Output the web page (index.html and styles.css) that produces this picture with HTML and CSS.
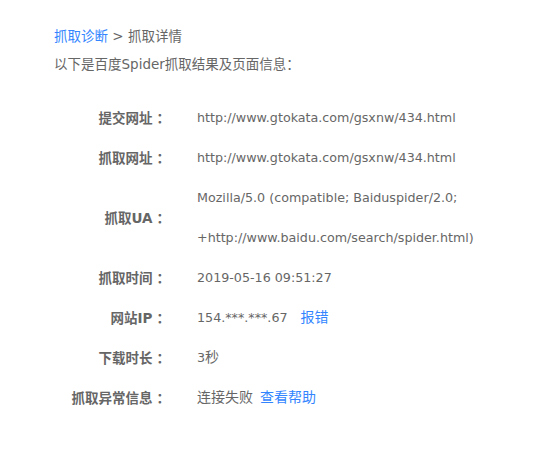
FILE: index.html
```html
<!DOCTYPE html>
<html lang="zh">
<head>
<meta charset="utf-8">
<link rel="stylesheet" href="styles.css">
</head>
<body>
<div class="page">
  <div class="crumb"><a class="link" href="#">抓取诊断</a> &gt; 抓取详情</div>
  <div class="intro">以下是百度Spider抓取结果及页面信息：</div>
  <div class="table">
    <div class="label">提交网址<span class="colon">：</span></div>
    <div class="value">http://www.gtokata.com/gsxnw/434.html</div>
    <div class="label">抓取网址<span class="colon">：</span></div>
    <div class="value">http://www.gtokata.com/gsxnw/434.html</div>
    <div class="label">抓取UA<span class="colon">：</span></div>
    <div class="value">Mozilla/5.0 (compatible; Baiduspider/2.0;<br>+http://www.baidu.com/search/spider.html)</div>
    <div class="label">抓取时间<span class="colon">：</span></div>
    <div class="value">2019-05-16 09:51:27</div>
    <div class="label">网站IP<span class="colon">：</span></div>
    <div class="value">154.***.***.67 <a class="link cjk gap" href="#">报错</a></div>
    <div class="label">下载时长<span class="colon">：</span></div>
    <div class="value">3<span class="cjk">秒</span></div>
    <div class="label">抓取异常信息<span class="colon">：</span></div>
    <div class="value"><span class="cjk">连接失败</span> <a class="link cjk gap-s" href="#">查看帮助</a></div>
  </div>
</div>
</body>
</html>
```

FILE: styles.css
```css
html, body {
  margin: 0;
  padding: 0;
  background: #fff;
}
body {
  font-family: "DejaVu Sans", "Noto Sans CJK SC", sans-serif;
  font-size: 12px;
  color: #666;
}
.page {
  padding: 22px 0 0 54px;
}
.crumb, .intro {
  line-height: 28px;
  font-size: 13.5px;
}
.link {
  color: #3385ff;
  text-decoration: none;
}
.gap {
  margin-left: 9px;
}
.gap-s {
  margin-left: 3px;
}
.table {
  margin-top: 20px;
  display: grid;
  grid-template-columns: 112px 1fr;
  column-gap: 31px;
  line-height: 40px;
}
.label {
  text-align: right;
  font-weight: bold;
  font-size: 13.5px;
  align-self: center;
}
.colon {
  display: inline-block;
  box-sizing: border-box;
  width: 13.5px;
  padding-left: 4px;
  white-space: nowrap;
  text-align: left;
}
.value {
  font-size: 12.7px;
}
.cjk {
  font-size: 14px;
  line-height: 1;
}
```
